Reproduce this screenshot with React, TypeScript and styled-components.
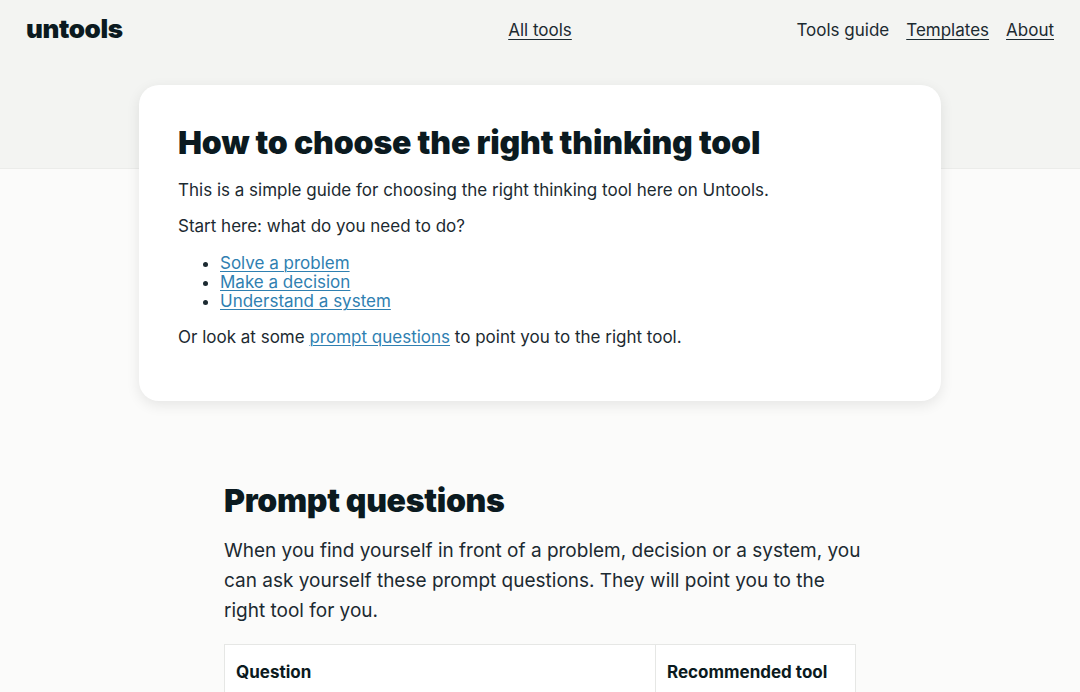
import React from "react";
import styled, { createGlobalStyle } from "styled-components";

const Global = createGlobalStyle`
  html, body { margin: 0; padding: 0; }
  body {
    background: #fbfbfa;
    font-family: Inter, "Noto Sans", sans-serif;
    color: #1c2a31;
    -webkit-font-smoothing: antialiased;
  }
  * { box-sizing: border-box; }
`;

const Band = styled.div`
  background: #f3f4f2;
  border-bottom: 1px solid #ebecea;
`;

const Header = styled.header`
  height: 58px;
  display: grid;
  grid-template-columns: 1fr auto 1fr;
  align-items: center;
  padding: 2px 26px 0;
  margin-bottom: 27px;
`;

const Logo = styled.a`
  font-size: 26px;
  font-weight: 900;
  color: #0b1a20;
  text-decoration: none;
  letter-spacing: -0.4px;
  justify-self: start;
  margin-top: -4px;
`;

const Nav = styled.nav<{ $end?: boolean }>`
  display: flex;
  gap: 17px;
  justify-self: ${(p) => (p.$end ? "end" : "center")};
`;

const NavLink = styled.a<{ $plain?: boolean }>`
  font-size: 17px;
  color: #1c2a31;
  text-decoration: ${(p) => (p.$plain ? "none" : "underline")};
  text-underline-offset: 3px;
  text-decoration-thickness: 1px;
`;

const Card = styled.section`
  width: 802px;
  margin: 0 auto -233px;
  background: #ffffff;
  border-radius: 20px;
  box-shadow: 0 4px 14px rgba(0, 0, 0, 0.09);
  padding: 39px 39px 53px;
  position: relative;
`;

const Title = styled.h1`
  margin: 0 0 17px;
  font-size: 32px;
  line-height: 38.4px;
  font-weight: 900;
  color: #0b1a20;
  letter-spacing: -0.15px;
`;

const Para = styled.p`
  margin: 0 0 14px;
  font-size: 17px;
  line-height: 22px;
  &:last-child { margin-bottom: 0; }
`;

const List = styled.ul`
  margin: 17px 0 15px;
  padding-left: 42px;
`;

const Item = styled.li`
  font-size: 17px;
  line-height: 19px;
`;

const Link = styled.a`
  color: #2f80b1;
  text-decoration: underline;
  text-underline-offset: 2px;
  text-decoration-thickness: 1px;
`;

const Main = styled.main`
  width: 632px;
  margin: 313px auto 0;
`;

const H2 = styled.h2`
  margin: 0 0 15px;
  font-size: 32px;
  line-height: 38.4px;
  font-weight: 900;
  color: #0b1a20;
  letter-spacing: -0.3px;
`;

const Lead = styled.p`
  margin: 0 -8px 18px 0;
  font-size: 19px;
  line-height: 30px;
`;

const Table = styled.table`
  width: 100%;
  border-collapse: collapse;
  background: #ffffff;
`;

const Th = styled.th<{ $wide?: boolean }>`
  text-align: left;
  font-size: 17px;
  font-weight: 700;
  color: #0b1a20;
  padding: 17px 11px 24px;
  border: 1px solid #e6e7e5;
  width: ${(p) => (p.$wide ? "431px" : "auto")};
`;

export default function App() {
  return (
    <>
      <Global />
      <Band>
        <Header>
          <Logo href="#">untools</Logo>
          <Nav>
            <NavLink href="#">All tools</NavLink>
          </Nav>
          <Nav $end>
            <NavLink href="#" $plain>Tools guide</NavLink>
            <NavLink href="#">Templates</NavLink>
            <NavLink href="#">About</NavLink>
          </Nav>
        </Header>
        <Card>
          <Title>How to choose the right thinking tool</Title>
          <Para>This is a simple guide for choosing the right thinking tool here on Untools.</Para>
          <Para>Start here: what do you need to do?</Para>
          <List>
            <Item><Link href="#">Solve a problem</Link></Item>
            <Item><Link href="#">Make a decision</Link></Item>
            <Item><Link href="#">Understand a system</Link></Item>
          </List>
          <Para>
            Or look at some <Link href="#">prompt questions</Link> to point you to the right tool.
          </Para>
        </Card>
      </Band>
      <Main>
        <H2>Prompt questions</H2>
        <Lead>
          When you find yourself in front of a problem, decision or a system, you can ask
          yourself these prompt questions. They will point you to the right tool for you.
        </Lead>
        <Table>
          <thead>
            <tr>
              <Th $wide>Question</Th>
              <Th>Recommended tool</Th>
            </tr>
          </thead>
        </Table>
      </Main>
    </>
  );
}
